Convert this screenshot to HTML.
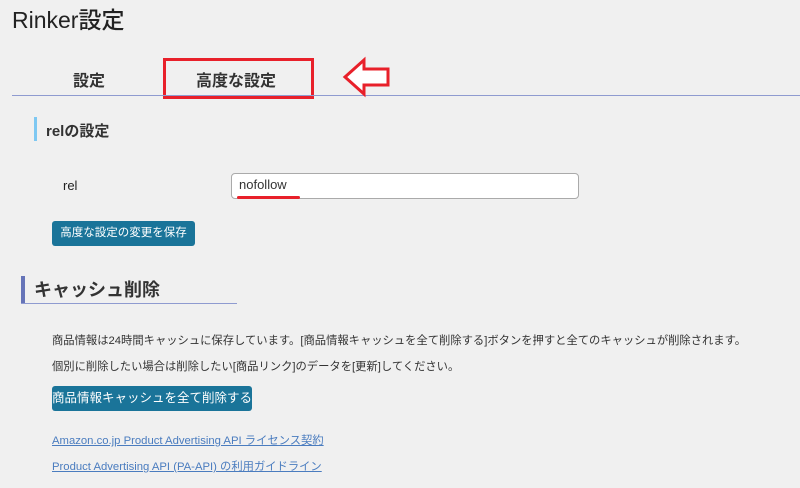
<!DOCTYPE html>
<html><head><meta charset="utf-8"><style>
body{margin:0;width:800px;height:488px;background:#f0f0f0;font-family:"Liberation Sans","Noto Sans CJK JP",sans-serif;color:#23282d;position:relative;overflow:hidden}
.a{position:absolute;white-space:nowrap}
.btn{position:absolute;background:#1a7499;color:#fff;border-radius:3px;font-size:12px;line-height:25px;text-align:center}
.lnk{color:#4a7cbf;text-decoration:underline;font-size:11.3px}
</style></head><body>
<div class="a" style="left:12px;top:1px;font-size:23px;font-weight:500;color:#222">Rinker設定</div>
<div class="a" style="left:73px;top:67px;font-size:16px;font-weight:bold;color:#333">設定</div>
<div class="a" style="left:196px;top:67px;font-size:16px;font-weight:bold;color:#333">高度な設定</div>
<div class="a" style="left:163px;top:58px;width:145px;height:35px;border:3px solid #e8202a"></div>
<div class="a" style="left:12px;top:95px;width:788px;height:1px;background:#8f9bd0"></div>
<svg class="a" style="left:342px;top:56px" width="50" height="42"><path d="M3 21 L22 4 L22 13 L46 13 L46 29 L22 29 L22 38 Z" fill="#fff" stroke="#e8202a" stroke-width="3" stroke-linejoin="miter"/></svg>
<div class="a" style="left:34px;top:117px;width:3px;height:24px;background:#7ec8f2"></div>
<div class="a" style="left:46px;top:120px;font-size:15px;font-weight:bold;color:#333">relの設定</div>
<div class="a" style="left:63px;top:178px;font-size:13px;color:#222">rel</div>
<div class="a" style="left:231px;top:173px;width:346px;height:24px;background:#fff;border:1px solid #aaa;border-radius:4px"></div>
<div class="a" style="left:239px;top:177px;font-size:13px;color:#333">nofollow</div>
<div class="a" style="left:237px;top:196px;width:63px;height:3px;background:#e8202a;border-radius:2px"></div>
<div class="btn" style="left:52px;top:221px;width:143px;font-size:11.5px">高度な設定の変更を保存</div>
<div class="a" style="left:21px;top:276px;width:4px;height:28px;background:#6674b8"></div>
<div class="a" style="left:21px;top:303px;width:216px;height:1px;background:#8f9bd0"></div>
<div class="a" style="left:34px;top:276px;font-size:18px;font-weight:bold;color:#333">キャッシュ削除</div>
<div class="a" style="left:52px;top:332px;font-size:11.3px;color:#333">商品情報は24時間キャッシュに保存しています。[商品情報キャッシュを全て削除する]ボタンを押すと全てのキャッシュが削除されます。</div>
<div class="a" style="left:52px;top:358px;font-size:11.3px;color:#333">個別に削除したい場合は削除したい[商品リンク]のデータを[更新]してください。</div>
<div class="btn" style="left:52px;top:386px;width:200px;font-size:12.5px">商品情報キャッシュを全て削除する</div>
<div class="a lnk" style="left:52px;top:432px">Amazon.co.jp Product Advertising API ライセンス契約</div>
<div class="a lnk" style="left:52px;top:458px">Product Advertising API (PA-API) の利用ガイドライン</div>
</body></html>
